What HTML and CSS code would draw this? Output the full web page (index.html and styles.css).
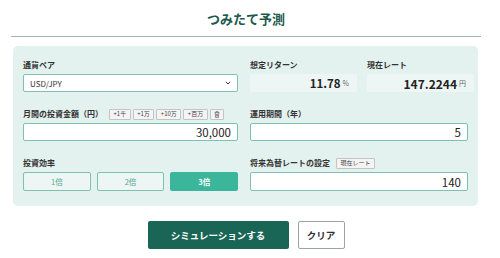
FILE: index.html
```html
<!DOCTYPE html>
<html lang="ja">
<head>
    <meta charset="UTF-8">
    <meta name="viewport" content="width=device-width, initial-scale=1.0">
    <title>つみたて予測</title>
    <link rel="stylesheet" href="styles.css">
</head>
<body>
    <div class="sim-container">
        <h1 class="sim-title">つみたて予測</h1>

        <div class="sim-panel">
            <div class="sim-grid">
                <!-- 左列 -->
                <div class="field">
                    <div class="field-label">通貨ペア</div>
                    <div class="select-box">
                        <span>USD/JPY</span>
                        <svg class="chevron" width="6" height="4" viewBox="0 0 6 4"><path d="M0.8 0.8 L3 3 L5.2 0.8" fill="none" stroke="#333" stroke-width="1"/></svg>
                    </div>
                </div>
                <div class="field info-row">
                    <div class="info">
                        <div class="field-label">想定リターン</div>
                        <div class="info-box"><span class="info-num">11.78</span><span class="info-unit">%</span></div>
                    </div>
                    <div class="info">
                        <div class="field-label">現在レート</div>
                        <div class="info-box"><span class="info-num big">147.2244</span><span class="info-unit">円</span></div>
                    </div>
                </div>

                <div class="field">
                    <div class="field-label">月間の投資金額（円）
                        <span class="chip">+1千</span><span class="chip">+1万</span><span class="chip">+10万</span><span class="chip">+百万</span><span class="chip trash">
                            <svg width="6" height="7" viewBox="0 0 5 6"><path d="M0.5 1.2 H4.5 M1.7 1.2 V0.5 H3.3 V1.2 M1 1.2 L1.2 5.5 H3.8 L4 1.2 M2 2.3 V4.6 M3 2.3 V4.6" fill="none" stroke="#666" stroke-width="0.6"/></svg>
                        </span>
                    </div>
                    <div class="input-box">30,000</div>
                </div>
                <div class="field">
                    <div class="field-label">運用期間（年）</div>
                    <div class="input-box">5</div>
                </div>

                <div class="field">
                    <div class="field-label">投資効率</div>
                    <div class="ratio-group">
                        <button class="ratio">1倍</button>
                        <button class="ratio">2倍</button>
                        <button class="ratio active">3倍</button>
                    </div>
                </div>
                <div class="field">
                    <div class="field-label">将来為替レートの設定 <span class="chip rate-chip">現在レート</span></div>
                    <div class="input-box tall">140</div>
                </div>
            </div>
        </div>

        <div class="actions">
            <button class="btn-primary">シミュレーションする</button>
            <button class="btn-clear">クリア</button>
        </div>
    </div>
</body>
</html>
```

FILE: styles.css
```css
body {
    font-family: 'Noto Sans CJK JP', 'Noto Sans', sans-serif;
    margin: 0;
    background-color: #fff;
    color: #333;
}
.sim-container {
    width: 470px;
    margin: 0 0 0 11px;
}
.sim-title {
    font-size: 13px;
    font-weight: 700;
    color: #1d5a4d;
    text-align: center;
    margin: 0;
    padding: 10px 0 8px;
    line-height: 18px;
    border-bottom: 1px solid #a5b5b0;
}
.sim-panel {
    margin: 9px 3px 0 2px;
    background-color: #e3f2ef;
    border-radius: 5px;
    padding: 13px 10px 15px 10px;
}
.sim-grid {
    display: grid;
    grid-template-columns: 215px 1fr;
    column-gap: 12px;
    row-gap: 16px;
}
.field-label {
    font-size: 8px;
    font-weight: 700;
    color: #333;
    line-height: 12px;
    height: 12px;
    margin-bottom: 3px;
    display: flex;
    align-items: center;
    white-space: nowrap;
}
.select-box,
.input-box {
    box-sizing: border-box;
    height: 18px;
    background: #fff;
    border: 1px solid #7cc1b1;
    border-radius: 2px;
    display: flex;
    align-items: center;
    padding: 0 6px;
}
.select-box {
    justify-content: space-between;
    font-size: 8px;
}
.input-box {
    justify-content: flex-end;
    font-size: 11.5px;
    color: #222;
}
.input-box.tall {
    height: 19px;
    margin-top: 3px;
}
.info-row {
    display: flex;
    gap: 10px;
    margin-right: -6px;
}
.info {
    flex: 1;
}
.info-box {
    height: 18px;
    background: #edf6f4;
    display: flex;
    align-items: center;
    justify-content: flex-end;
    padding: 0 8px;
}
.info-num {
    font-size: 11.5px;
    font-weight: 700;
    color: #222;
}
.info-num.big {
    font-size: 12px;
}
.info-unit {
    font-size: 7px;
    color: #666;
    margin-left: 2px;
}
.chip {
    display: inline-flex;
    align-items: center;
    justify-content: center;
    box-sizing: border-box;
    height: 11px;
    padding: 0 3.5px;
    margin-left: 2px;
    font-size: 6px;
    font-weight: 400;
    color: #444;
    background: #f4f4f4;
    border: 1px solid #c4c4c4;
    border-radius: 1px;
}
.field-label .chip:first-child {
    margin-left: 6px;
}
.chip.trash {
    padding: 0 3px;
}
.rate-chip {
    margin-left: 4px;
    font-size: 6px;
}
.ratio-group {
    display: flex;
    gap: 6px;
    margin-top: 2px;
}
.ratio {
    flex: 1;
    height: 19px;
    font-family: inherit;
    font-size: 7.5px;
    color: #52a690;
    background: #edf6f4;
    border: 1px solid #7cc1b1;
    border-radius: 2px;
    padding: 0;
}
.ratio.active {
    background: #3bb69a;
    border-color: #3bb69a;
    color: #fff;
    font-weight: 700;
}
.actions {
    display: flex;
    justify-content: center;
    gap: 9px;
    margin-top: 15px;
}
.btn-primary {
    width: 141px;
    height: 28px;
    background: #196656;
    color: #fff;
    border: none;
    border-radius: 2px;
    font-family: inherit;
    font-size: 9.5px;
    font-weight: 700;
}
.btn-clear {
    width: 47px;
    height: 28px;
    background: #fff;
    color: #333;
    border: 1px solid #9aa5a2;
    border-radius: 2px;
    font-family: inherit;
    font-size: 9.5px;
    font-weight: 700;
}
```
